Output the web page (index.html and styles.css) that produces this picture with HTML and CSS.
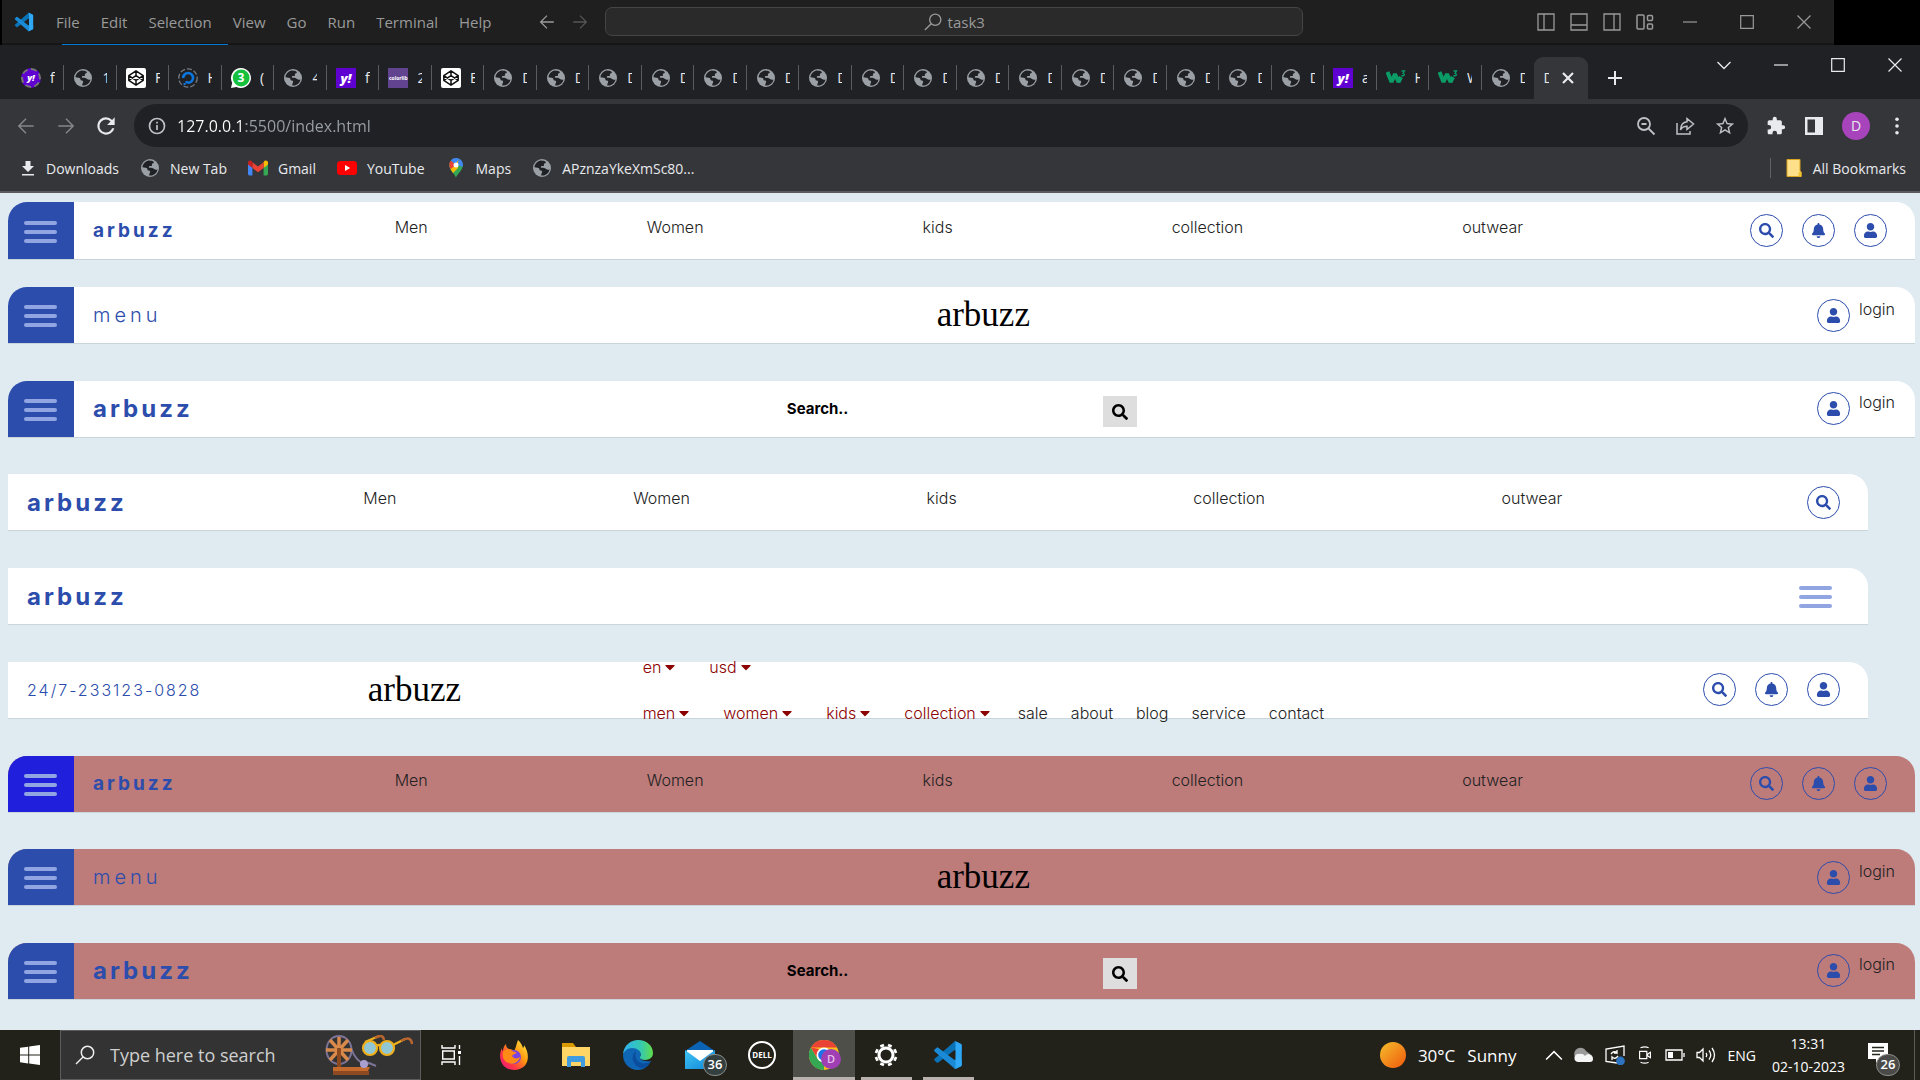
FILE: index.html
```html
<!DOCTYPE html>
<html lang="en">
<head>
<meta charset="utf-8">
<title>Document</title>
<link rel="stylesheet" href="styles.css">
</head>
<body>
<svg class="defs" aria-hidden="true">
  <defs>
    <linearGradient id="g-sun" x1="0" y1="0" x2="1" y2="1"><stop offset="0" stop-color="#f4be2c"/><stop offset="1" stop-color="#f0580c"/></linearGradient>
    <linearGradient id="g-fox" x1="1" y1="0" x2="0" y2="1"><stop offset="0" stop-color="#fff44f"/><stop offset=".4" stop-color="#ff980e"/><stop offset=".7" stop-color="#ff3647"/><stop offset="1" stop-color="#e31587"/></linearGradient>
    <linearGradient id="g-edge" x1="0" y1="0" x2="1" y2="0"><stop offset="0" stop-color="#2fb1f0"/><stop offset=".6" stop-color="#35c9b0"/><stop offset="1" stop-color="#62dc4a"/></linearGradient>
    <linearGradient id="g-mail" x1="0" y1="0" x2="1" y2="1"><stop offset="0" stop-color="#40c4f4"/><stop offset="1" stop-color="#0f86d8"/></linearGradient>
  </defs>
  <symbol id="i-vscode" viewBox="0 0 24 24"><path fill="#0a73b8" d="M17.5 1 23 3.5v5L17 8.200 4.200 17.900a1 1 0 0 1-1.300 0L1.300 16.400a1 1 0 0 1 0-1.500z"/><path fill="#1a8ad6" d="M17.500 23 23 20.500v-5L17 15.800 4.200 6.100a1 1 0 0 0-1.300 0L1.300 7.600a1 1 0 0 0 0 1.500z"/><path fill="#2fa8f6" d="M17 .9a1.500 1.500 0 0 1 1 0l4.200 2a1.500 1.500 0 0 1 .8 1.300v15.600a1.500 1.500 0 0 1-.8 1.300l-4.200 2a1.500 1.500 0 0 1-1.600-.3c.6.500 1.600.1 1.600-.8V2c0-.9-1-1.300-1.600-.8z"/></symbol>
  <symbol id="i-back" viewBox="0 0 20 20"><path fill="none" stroke="currentColor" stroke-width="1.600" d="M18.500 10H2M10 2l-8 8 8 8"/></symbol>
  <symbol id="i-forward" viewBox="0 0 20 20"><path fill="none" stroke="currentColor" stroke-width="1.600" d="M1.500 10H18M10 2l8 8-8 8"/></symbol>
  <symbol id="i-lens" viewBox="0 0 20 20"><g fill="none" stroke="currentColor" stroke-width="1.500"><circle cx="12.500" cy="7.500" r="6.200"/><path d="M8 12 1 19"/></g></symbol>
  <symbol id="i-panel-left" viewBox="0 0 18 18"><path fill="none" stroke="currentColor" stroke-width="1.300" d="M1 1h16v16H1zM7 1v16"/></symbol>
  <symbol id="i-panel-bottom" viewBox="0 0 18 18"><path fill="none" stroke="currentColor" stroke-width="1.300" d="M1 1h16v16H1zM1 12h16"/></symbol>
  <symbol id="i-panel-right" viewBox="0 0 18 18"><path fill="none" stroke="currentColor" stroke-width="1.300" d="M1 1h16v16H1zM11 1v16"/></symbol>
  <symbol id="i-layout" viewBox="0 0 18 18"><g fill="none" stroke="currentColor" stroke-width="1.500"><rect x="1" y="2" width="7" height="14" rx="1"/><rect x="11.500" y="2.500" width="5" height="5" rx="1"/><rect x="11.500" y="11" width="5" height="5" rx="1"/></g></symbol>
  <symbol id="i-min" viewBox="0 0 14 14"><path stroke="currentColor" stroke-width="1.200" d="M0 7h14"/></symbol>
  <symbol id="i-max" viewBox="0 0 14 14"><path fill="none" stroke="currentColor" stroke-width="1.200" d="M.7.7h12.600v12.600H.7z"/></symbol>
  <symbol id="i-close" viewBox="0 0 14 14"><path stroke="currentColor" stroke-width="1.200" d="m.5.5 13 13m0-13-13 13"/></symbol>
  <symbol id="i-close-bold" viewBox="0 0 14 14"><path stroke="currentColor" stroke-width="2.200" d="m2 2 10 10m0-10L2 12"/></symbol>
  <symbol id="i-chevron" viewBox="0 0 14 14"><path fill="none" stroke="currentColor" stroke-width="1.300" d="m.5 4 6.500 6.500L13.500 4"/></symbol>
  <symbol id="i-plus" viewBox="0 0 14 14"><path stroke="currentColor" stroke-width="2" d="M7 0v14M0 7h14"/></symbol>
  <symbol id="i-globe" viewBox="0 0 20 20"><circle cx="10" cy="10" r="9" fill="#9aa0a6"/><path fill="#202124" d="M8.800 2.600c-3.300.5-6 3.200-6.300 6.600l1.500.3c2.500.3 3.400.7 3.400 1.800 0 .8.6 1.200 1.500 1.300 1 .1 1.500.8 1.100 1.900-.3 1-.8 1.600-.8 3 4 .5 7.600-2 8.300-6-1.400.4-2.300.4-3.400-.4-1-.8-2.300-1.300-4-1.300-1.200 0-1.500-.6-1.100-1.300.4-.6 1-.6 2-.5 1.200 0 1-.7.9-1.500-.1-1 .9-1.100 1.600-1.500.5-.3.500-1.100-.2-1.600C11.500 2.400 9.400 2.900 8.800 2.600z"/></symbol>
  <symbol id="i-codepen" viewBox="0 0 20 20"><rect width="20" height="20" rx="2" fill="#fff"/><path fill="none" stroke="#111" stroke-width="1.500" stroke-linejoin="round" d="m10 2.800 7.200 4.800v4.800L10 17.200l-7.200-4.800V7.600zM2.800 7.600 10 12.400l7.200-4.800M2.800 12.400 10 7.600l7.200 4.800M10 2.800v4.800m0 4.800v4.800"/></symbol>
  <symbol id="i-ocean" viewBox="0 0 20 20"><circle cx="10" cy="10" r="9.200" fill="none" stroke="#777c82" stroke-width="1.300" stroke-dasharray="5 2"/><path fill="none" stroke="#0b76e0" stroke-width="2.600" d="M10 14.800A4.900 4.900 0 1 0 5.200 10"/><path fill="#0b76e0" d="M7.500 13H10v2.500H7.500zM5.500 15h2v2h-2z"/></symbol>
  <symbol id="i-bubble" viewBox="0 0 20 20"><path fill="#fff" d="M10 0a10 10 0 1 1-4.600 18.900L0 20l1.200-5.200A10 10 0 0 1 10 0z"/><circle cx="10.200" cy="10" r="8.400" fill="#16c13f"/></symbol>
  <symbol id="i-w3" viewBox="0 0 20 20"><path fill="none" stroke="#0a9b66" stroke-width="4" stroke-linejoin="bevel" d="m1.500 4 4 10L9 6l3.500 8L15 9"/><path fill="none" stroke="#0a9b66" stroke-width="1.300" d="M15.500 3h3l-1.500 2.400c2.200.2 1.800 3-1.700 2.200"/></symbol>
  <symbol id="i-reload" viewBox="0 0 24 24"><path fill="currentColor" d="M17.650 6.350A7.960 7.960 0 0 0 12 4a8 8 0 1 0 7.730 10h-2.080A6 6 0 1 1 12 6c1.660 0 3.140.69 4.220 1.780L13 11h7V4z"/></symbol>
  <symbol id="i-info" viewBox="0 0 18 18"><g fill="none" stroke="currentColor" stroke-width="1.700"><circle cx="9" cy="9" r="7.500"/><path d="M9 8v5M9 4.800v1.800"/></g></symbol>
  <symbol id="i-zoom-out" viewBox="0 0 20 20"><g fill="none" stroke="currentColor" stroke-width="1.800"><circle cx="8" cy="8" r="6"/><path d="m12.500 12.500 6 6M5.500 8h5"/></g></symbol>
  <symbol id="i-share" viewBox="0 0 20 20"><g fill="none" stroke="currentColor" stroke-width="1.500"><path d="M2 7v11h13v-3M12 2.500l6.500 5.500-6.500 5.500v-3.200c-3 0-5 1-6.500 3.700.3-5 2.500-8 6.500-8.300z"/></g></symbol>
  <symbol id="i-star" viewBox="0 0 24 24"><path fill="currentColor" d="m22 9.240-7.190-.62L12 2 9.190 8.630 2 9.240l5.460 4.730L5.820 21 12 17.270 18.180 21l-1.630-7.030zM12 15.400l-3.760 2.270 1-4.280-3.320-2.880 4.380-.38L12 6.100l1.710 4.040 4.380.38-3.320 2.880 1 4.280z"/></symbol>
  <symbol id="i-puzzle" viewBox="0 0 24 24"><path fill="currentColor" d="M20.500 11H19V7c0-1.100-.9-2-2-2h-4V3.500a2.500 2.500 0 0 0-5 0V5H4c-1.100 0-1.990.9-1.990 2v3.800H3.500a2.700 2.700 0 0 1 0 5.400H2V20c0 1.100.9 2 2 2h3.800v-1.500a2.700 2.700 0 0 1 5.400 0V22H17c1.100 0 2-.9 2-2v-4h1.500a2.500 2.500 0 0 0 0-5z"/></symbol>
  <symbol id="i-side" viewBox="0 0 20 20"><path fill="currentColor" fill-rule="evenodd" d="M1 1h18v18H1zm2.500 2.500v13H11v-13z"/></symbol>
  <symbol id="i-dots" viewBox="0 0 20 20"><g fill="currentColor"><circle cx="10" cy="2.500" r="2"/><circle cx="10" cy="10" r="2"/><circle cx="10" cy="17.500" r="2"/></g></symbol>
  <symbol id="i-download" viewBox="0 0 16 16"><path fill="currentColor" d="M5.500 1h5v5H14l-6 6-6-6h3.500zM2 14h12v1.600H2z"/></symbol>
  <symbol id="i-gmail" viewBox="0 0 20 16"><path fill="#4285f4" d="M0 2.500V14a1.400 1.400 0 0 0 1.400 1.400h3V6z"/><path fill="#34a853" d="M20 2.500V14a1.400 1.400 0 0 1-1.400 1.400h-3V6z"/><path fill="#fbbc04" d="M15.600 2.200V8L20 4.500V2.800c0-2.200-2.300-3-3.600-1.900z"/><path fill="#ea4335" d="M4.400 8V2.200L10 6.400l5.600-4.200V8L10 12.200z"/><path fill="#c5221f" d="M0 2.800v1.700L4.400 8V2.200L3.600.9C2.300-.2 0 .6 0 2.800z"/></symbol>
  <symbol id="i-youtube" viewBox="0 0 20 16"><rect y="1" width="20" height="14" rx="3.500" fill="#f00"/><path fill="#fff" d="m8 5 5.200 3L8 11z"/></symbol>
  <symbol id="i-maps" viewBox="0 0 14 20"><path fill="#34a853" d="M7 20C6.500 16 .2 13 .2 7A6.800 6.800 0 0 1 13.800 7C13.800 13 7.500 16 7 20z"/><path fill="#fbbc04" d="m1.500 11 8-9.500L9 10l-5 5z"/><path fill="#ea4335" d="M1.900 2.500 7 7l-5.500 4C-.3 8-.2 5 1.900 2.500z"/><path fill="#4285f4" d="M1.900 2.500C4 0 7-.5 9.500.5L7 7zM9.500.5c4 1.500 5 5 4 8.500L9 7z"/><circle cx="7" cy="7" r="2.500" fill="#fff"/></symbol>
  <symbol id="i-folder" viewBox="0 0 16 18"><path fill="#ffe08a" stroke="#d9a520" d="M1 .5h13V12l1.300 1v4.500H1z"/><path fill="#f1c232" d="M12.500 13H15v4.500h-2.500z"/></symbol>
  <symbol id="i-search" viewBox="0 0 512 512"><path fill="currentColor" d="M505 442.700L405.300 343c-4.500-4.500-10.600-7-17-7H372c27.600-35.300 44-79.700 44-128C416 93.100 322.900 0 208 0S0 93.100 0 208s93.100 208 208 208c48.300 0 92.700-16.400 128-44v16.300c0 6.400 2.500 12.500 7 17l99.700 99.700c9.400 9.400 24.600 9.400 33.900 0l28.300-28.300c9.400-9.400 9.400-24.600.1-34zM208 336c-70.700 0-128-57.200-128-128 0-70.700 57.200-128 128-128 70.700 0 128 57.200 128 128 0 70.700-57.200 128-128 128z"/></symbol>
  <symbol id="i-bell" viewBox="0 0 448 512"><path fill="currentColor" d="M224 512c35.320 0 63.970-28.650 63.970-64H160.030c0 35.350 28.650 64 63.970 64zm215.390-149.710c-19.320-20.760-55.470-51.990-55.470-154.290 0-77.700-54.480-139.900-127.940-155.160V32c0-17.670-14.320-32-31.980-32s-31.980 14.330-31.980 32v20.840C118.560 68.100 64.080 130.300 64.080 208c0 102.300-36.150 133.530-55.470 154.290-6 6.450-8.660 14.160-8.610 21.710.11 16.400 12.980 32 32.100 32h383.800c19.120 0 32-15.600 32.100-32 .05-7.550-2.610-15.270-8.610-21.710z"/></symbol>
  <symbol id="i-user" viewBox="0 0 448 512"><path fill="currentColor" d="M224 256c70.700 0 128-57.300 128-128S294.700 0 224 0 96 57.300 96 128s57.300 128 128 128zm89.600 32h-16.700c-22.200 10.200-46.900 16-72.900 16s-50.600-5.800-72.900-16h-16.700C60.200 288 0 348.200 0 422.400V464c0 26.500 21.500 48 48 48h352c26.500 0 48-21.500 48-48v-41.600c0-74.200-60.200-134.400-134.400-134.400z"/></symbol>
  <symbol id="i-caret" viewBox="0 0 320 512"><path fill="currentColor" d="M31.300 192h257.300c17.800 0 26.700 21.500 14.100 34.100L174.100 354.800c-7.800 7.800-20.500 7.800-28.300 0L17.200 226.100C4.600 213.500 13.500 192 31.300 192z"/></symbol>
  <symbol id="i-windows" viewBox="0 0 20 20"><path fill="#fff" d="M0 2.800 8.200 1.700v7.900H0zM9.200 1.500 20 0v9.600H9.200zM0 10.500h8.200v7.900L0 17.200zM9.200 10.500H20V20L9.200 18.500z"/></symbol>
  <symbol id="i-wheel" viewBox="0 0 88 40"><g fill="none" stroke="#7d7397" stroke-width="2"><ellipse cx="14" cy="15" rx="12.500" ry="14"/><path d="M26 13q5 14 14 16M36 33l8-5 7 3"/></g><g stroke="#d98a4b" stroke-width="3.500"><path d="M14 2v26M1 15h26M5 5l18 20M23 5 5 25"/></g><path fill="#8d4a20" d="M12 13h4v20h-4z"/><path fill="#c46a2c" d="M8 32h37l-2 4v4H8z"/><path fill="#8d4a20" d="M8 36h36v4H8z"/><circle cx="39" cy="29" r="4" fill="#aaa0d0"/><g stroke="#efb01c" stroke-width="2.200"><circle cx="45" cy="13" r="7" fill="#91c7d4"/><circle cx="62" cy="13" r="7" fill="#91c7d4"/><path fill="none" d="M52 11q2-2 4 0M40 7 54 1M68 10 80 4"/></g><path fill="none" stroke="#b96530" stroke-width="2.500" d="M50 3q8-5 9 2M76 6q10-6 11 3"/></symbol>
  <symbol id="i-taskview" viewBox="0 0 22 22"><path fill="none" stroke="#fff" stroke-width="1.400" d="M1 1v3h13V1M1 21v-3h13v3M1.700 7h11.600v8H1.700zM18.500 1v4M18.500 12v9"/><path fill="#fff" d="M17 7h3v3h-3z"/></symbol>
  <symbol id="i-firefox" viewBox="0 0 30 30"><path fill="url(#g-fox)" d="M19 0c3 3 4 5 5 8 1-1 1-2 1-3 7 10 5 25-10 25C3 30-2 18 3 8c0 2 0 2 1 3 0-3 1-5 3-7 0 3 1 4 3 5 3 0 4 1 5 2 2-3 2-6 4-11z"/><circle cx="15" cy="17" r="7" fill="#7a42e0"/><path fill="#ff8a16" d="M4 12c3-4 7-3 9-1 2 1 4 1 5 2-2 1-4 1-5 3 2 3 5 3 8 1-1 5-6 8-11 6-5-1-7-6-6-11z"/></symbol>
  <symbol id="i-explorer" viewBox="0 0 30 26"><path fill="#d99a00" d="M1 1h11l3 4v6H1z"/><path fill="#ffd566" d="M1 5h28v19H1z"/><path fill="#3f9ce0" d="M6 25V16q0-2 2-2h14q2 0 2 2v9h-4v-5h-10v5z"/></symbol>
  <symbol id="i-edge" viewBox="0 0 30 30"><path fill="#0f66b5" d="M0 15C2 7 8 6 12 8c6 2 7 6 5 9-1 2 3 5 11 4-3 6-8 9-13 9C6 30 0 23 0 15z"/><path fill="url(#g-edge)" d="M0 14C1 5 8 0 15 0c9 0 15 6 15 13 0 7-8 8-12 6-2-1-1-2 0-4 0-4-4-7-9-7-4 0-7 2-9 6z"/><path fill="#0b4e9d" d="M13 11c-5 3-5 13 4 17 5 1 9-3 10-6-8 4-17-1-14-11z"/></symbol>
  <symbol id="i-mail" viewBox="0 0 30 28"><path fill="#0b63b6" d="m0 10 15-10 15 10z"/><path fill="#fff" d="M2 9h26v8L15 24 2 17z"/><path fill="url(#g-mail)" d="M0 9l15 11L30 9v19H0z"/></symbol>
  <symbol id="i-chrome" viewBox="0 0 30 30"><circle cx="15" cy="15" r="15" fill="#fbc116"/><path fill="#ea4335" d="M2 7.500A15 15 0 0 1 28 7.500H15z"/><path fill="#34a853" d="M2 7.500 8.500 18.800 15 22v8A15 15 0 0 1 2 7.500z"/><path fill="#ea4335" d="M2 7.500 8.500 18.500 10 9z"/><circle cx="15" cy="15" r="7.500" fill="#fff"/><circle cx="15" cy="15" r="5.800" fill="#1a73e8"/></symbol>
  <symbol id="i-gear" viewBox="0 0 24 24"><g fill="none" stroke="#fff"><circle cx="12" cy="12" r="7" stroke-width="3"/><path stroke-width="4" d="M15.300 4 16.400 1.500M20 8.700l2.500-1.100M20 15.300l2.500 1.100M15.300 20l1.100 2.500M8.700 20l-1.100 2.500M4 15.300l-2.500 1.100M4 8.700 1.500 7.600M8.700 4 7.600 1.500"/></g></symbol>
  <symbol id="i-up" viewBox="0 0 16 16"><path fill="none" stroke="#fff" stroke-width="1.400" d="m1 12 7-7 7 7"/></symbol>
  <symbol id="i-cloud" viewBox="0 0 20 16"><path fill="#9b9b99" d="M1 10A6 6 0 0 1 12 4l4 3-8 5z"/><path fill="#f5f5f5" d="M4 15a4 4 0 0 1 1-8q4-1 6 2 1-2 4-2 4 1 4 5 0 3-3 3z"/></symbol>
  <symbol id="i-sync" viewBox="0 0 20 20"><path fill="none" stroke="#fff" stroke-width="1.300" d="M12 18 1 16.500V4L19 1v10M6 9q3-4 6-1V5m0 3H9M13 11q-3 4-6 1v3"/><circle cx="15.500" cy="16" r="4.400" fill="#2d73bf"/></symbol>
  <symbol id="i-meet" viewBox="0 0 16 20"><path fill="none" stroke="#fff" stroke-width="1.300" d="M3 2q5-2 9 0M3 18q5 2 9 0M2 6h8v8H2zM11 9l3-2v6l-3-2z"/></symbol>
  <symbol id="i-battery" viewBox="0 0 20 12"><path fill="none" stroke="#fff" stroke-width="1.300" d="M1 1h16v10H1zM19 4v4"/><path fill="#fff" d="M3 3h5v6H3z"/></symbol>
  <symbol id="i-volume" viewBox="0 0 20 16"><path fill="none" stroke="#fff" stroke-width="1.300" d="M1 5.500h2.500L7 2v12l-3.500-3.500H1zM10 6q1.500 2 0 4M13 3.500q3.500 4.500 0 9M16 1q5 7 0 14"/></symbol>
  <symbol id="i-notes" viewBox="0 0 20 20"><path fill="#fff" d="M0 0h20v16h-8l-4 4v-4H0z"/><path stroke="#24251d" stroke-width="1.500" d="M4 4.500h12M4 8h12M4 11.500h8"/></symbol>
</svg>

<header class="editor">
  <div class="editor-bar">
    <svg class="ic20"><use href="#i-vscode"/></svg>
    <nav class="menus">
      <button>File</button><button>Edit</button><button>Selection</button><button>View</button><button>Go</button><button>Run</button><button>Terminal</button><button>Help</button>
    </nav>
    <div class="history">
      <button aria-label="Back"><svg class="ic16"><use href="#i-back"/></svg></button>
      <button class="dim" aria-label="Forward"><svg class="ic16"><use href="#i-forward"/></svg></button>
    </div>
    <button class="command"><svg class="ic18"><use href="#i-lens"/></svg>task3</button>
    <div class="layouts">
      <button aria-label="Primary side bar"><svg class="ic18"><use href="#i-panel-left"/></svg></button>
      <button aria-label="Panel"><svg class="ic18"><use href="#i-panel-bottom"/></svg></button>
      <button aria-label="Secondary side bar"><svg class="ic18"><use href="#i-panel-right"/></svg></button>
      <button aria-label="Customize layout"><svg class="ic18"><use href="#i-layout"/></svg></button>
    </div>
    <div class="winctl">
      <button aria-label="Minimize"><svg class="ic14"><use href="#i-min"/></svg></button>
      <button aria-label="Maximize"><svg class="ic14"><use href="#i-max"/></svg></button>
      <button aria-label="Close"><svg class="ic14"><use href="#i-close"/></svg></button>
    </div>
  </div>
</header>

<section class="browser">
  <div class="tabstrip">
    <div class="tabs">
      <button class="tab"><span class="fav yahoo ring">y!</span><span class="tt">f</span></button>
      <button class="tab"><svg class="fav"><use href="#i-globe"/></svg><span class="tt">1</span></button>
      <button class="tab"><svg class="fav"><use href="#i-codepen"/></svg><span class="tt">F</span></button>
      <button class="tab"><svg class="fav"><use href="#i-ocean"/></svg><span class="tt">H</span></button>
      <button class="tab"><span class="fav chat"><svg><use href="#i-bubble"/></svg><b>3</b></span><span class="tt">(</span></button>
      <button class="tab"><svg class="fav"><use href="#i-globe"/></svg><span class="tt">4</span></button>
      <button class="tab"><span class="fav yahoo">y!</span><span class="tt">f</span></button>
      <button class="tab"><span class="fav colorlib">colorlib</span><span class="tt">2</span></button>
      <button class="tab"><svg class="fav"><use href="#i-codepen"/></svg><span class="tt">E</span></button>
      <button class="tab"><svg class="fav"><use href="#i-globe"/></svg><span class="tt">D</span></button>
      <button class="tab"><svg class="fav"><use href="#i-globe"/></svg><span class="tt">D</span></button>
      <button class="tab"><svg class="fav"><use href="#i-globe"/></svg><span class="tt">D</span></button>
      <button class="tab"><svg class="fav"><use href="#i-globe"/></svg><span class="tt">D</span></button>
      <button class="tab"><svg class="fav"><use href="#i-globe"/></svg><span class="tt">D</span></button>
      <button class="tab"><svg class="fav"><use href="#i-globe"/></svg><span class="tt">D</span></button>
      <button class="tab"><svg class="fav"><use href="#i-globe"/></svg><span class="tt">D</span></button>
      <button class="tab"><svg class="fav"><use href="#i-globe"/></svg><span class="tt">D</span></button>
      <button class="tab"><svg class="fav"><use href="#i-globe"/></svg><span class="tt">D</span></button>
      <button class="tab"><svg class="fav"><use href="#i-globe"/></svg><span class="tt">D</span></button>
      <button class="tab"><svg class="fav"><use href="#i-globe"/></svg><span class="tt">D</span></button>
      <button class="tab"><svg class="fav"><use href="#i-globe"/></svg><span class="tt">D</span></button>
      <button class="tab"><svg class="fav"><use href="#i-globe"/></svg><span class="tt">D</span></button>
      <button class="tab"><svg class="fav"><use href="#i-globe"/></svg><span class="tt">D</span></button>
      <button class="tab"><svg class="fav"><use href="#i-globe"/></svg><span class="tt">D</span></button>
      <button class="tab"><svg class="fav"><use href="#i-globe"/></svg><span class="tt">D</span></button>
      <button class="tab"><span class="fav yahoo">y!</span><span class="tt">a</span></button>
      <button class="tab"><svg class="fav"><use href="#i-w3"/></svg><span class="tt">H</span></button>
      <button class="tab"><svg class="fav"><use href="#i-w3"/></svg><span class="tt">W</span></button>
      <button class="tab"><svg class="fav"><use href="#i-globe"/></svg><span class="tt">D</span></button>
    </div>
    <button class="tab-active"><span class="tt">D</span><svg class="ic14"><use href="#i-close-bold"/></svg></button>
    <button class="newtab" aria-label="New tab"><svg class="ic14"><use href="#i-plus"/></svg></button>
    <div class="winctl winctl-browser">
      <button aria-label="Search tabs"><svg class="ic14"><use href="#i-chevron"/></svg></button>
      <button aria-label="Minimize window"><svg class="ic14"><use href="#i-min"/></svg></button>
      <button aria-label="Maximize window"><svg class="ic14"><use href="#i-max"/></svg></button>
      <button aria-label="Close window"><svg class="ic14"><use href="#i-close"/></svg></button>
    </div>
  </div>
  <div class="toolbar">
    <button class="muted" aria-label="Go back"><svg class="ic18"><use href="#i-back"/></svg></button>
    <button class="muted" aria-label="Go forward"><svg class="ic18"><use href="#i-forward"/></svg></button>
    <button aria-label="Reload"><svg class="ic26"><use href="#i-reload"/></svg></button>
    <div class="omnibox">
      <svg class="ic18"><use href="#i-info"/></svg>
      <input type="text" class="url" aria-label="Address" value="127.0.0.1:5500/index.html">
      <button aria-label="Zoom"><svg class="ic20"><use href="#i-zoom-out"/></svg></button>
      <button aria-label="Share"><svg class="ic20"><use href="#i-share"/></svg></button>
      <button aria-label="Bookmark"><svg class="ic22"><use href="#i-star"/></svg></button>
    </div>
    <div class="extras">
      <button aria-label="Extensions"><svg class="ic20"><use href="#i-puzzle"/></svg></button>
      <button aria-label="Side panel"><svg class="ic20"><use href="#i-side"/></svg></button>
      <button class="avatar">D</button>
      <button aria-label="Menu"><svg class="ic18"><use href="#i-dots"/></svg></button>
    </div>
  </div>
  <nav class="bookmarks">
    <a href="#"><svg class="ic16"><use href="#i-download"/></svg>Downloads</a>
    <a href="#"><svg class="ic20"><use href="#i-globe"/></svg>New Tab</a>
    <a href="#"><svg class="ic20"><use href="#i-gmail"/></svg>Gmail</a>
    <a href="#"><svg class="ic20"><use href="#i-youtube"/></svg>YouTube</a>
    <a href="#"><svg class="ic20"><use href="#i-maps"/></svg>Maps</a>
    <a href="#"><svg class="ic20"><use href="#i-globe"/></svg>APznzaYkeXmSc80...</a>
    <a href="#" class="all"><svg class="ic18"><use href="#i-folder"/></svg>All Bookmarks</a>
  </nav>
</section>

<main class="page">
  <header class="bar first">
    <button class="burger" aria-label="Menu"><i></i><i></i><i></i></button>
    <a href="#" class="brand small">arbuzz</a>
    <nav class="links"><a href="#">Men</a><a href="#">Women</a><a href="#">kids</a><a href="#">collection</a><a href="#">outwear</a></nav>
    <div class="icons">
      <button aria-label="Search"><svg><use href="#i-search"/></svg></button>
      <button aria-label="Notifications"><svg><use href="#i-bell"/></svg></button>
      <button aria-label="Account"><svg><use href="#i-user"/></svg></button>
    </div>
  </header>
  <div class="stack">
    <header class="bar spread">
      <button class="burger" aria-label="Menu"><i></i><i></i><i></i></button>
      <a href="#" class="brand word">menu</a>
      <span class="serif">arbuzz</span>
      <div class="account"><button aria-label="Account"><svg><use href="#i-user"/></svg></button><a href="#">login</a></div>
    </header>
    <header class="bar spread">
      <button class="burger" aria-label="Menu"><i></i><i></i><i></i></button>
      <a href="#" class="brand">arbuzz</a>
      <form class="search"><input type="text" aria-label="Search" placeholder="Search.."><button type="button" aria-label="Submit search"><svg><use href="#i-search"/></svg></button></form>
      <div class="account"><button aria-label="Account"><svg><use href="#i-user"/></svg></button><a href="#">login</a></div>
    </header>
    <header class="bar short">
      <a href="#" class="brand">arbuzz</a>
      <nav class="links"><a href="#">Men</a><a href="#">Women</a><a href="#">kids</a><a href="#">collection</a><a href="#">outwear</a></nav>
      <div class="icons"><button aria-label="Search"><svg><use href="#i-search"/></svg></button></div>
    </header>
    <header class="bar short spread">
      <a href="#" class="brand">arbuzz</a>
      <button class="burger plain" aria-label="Menu"><i></i><i></i><i></i></button>
    </header>
    <header class="bar short shop">
      <a href="#" class="phone">24/7-233123-0828</a>
      <span class="serif">arbuzz</span>
      <nav class="lists">
        <div class="row"><button>en<svg><use href="#i-caret"/></svg></button><button>usd<svg><use href="#i-caret"/></svg></button></div>
        <div class="row"><button>men<svg><use href="#i-caret"/></svg></button><button>women<svg><use href="#i-caret"/></svg></button><button>kids<svg><use href="#i-caret"/></svg></button><button>collection<svg><use href="#i-caret"/></svg></button><a href="#">sale</a><a href="#">about</a><a href="#">blog</a><a href="#">service</a><a href="#">contact</a></div>
      </nav>
      <div class="icons">
        <button aria-label="Search"><svg><use href="#i-search"/></svg></button>
        <button aria-label="Notifications"><svg><use href="#i-bell"/></svg></button>
        <button aria-label="Account"><svg><use href="#i-user"/></svg></button>
      </div>
    </header>
    <header class="bar rose">
      <button class="burger bright" aria-label="Menu"><i></i><i></i><i></i></button>
      <a href="#" class="brand small">arbuzz</a>
      <nav class="links"><a href="#">Men</a><a href="#">Women</a><a href="#">kids</a><a href="#">collection</a><a href="#">outwear</a></nav>
      <div class="icons">
        <button aria-label="Search"><svg><use href="#i-search"/></svg></button>
        <button aria-label="Notifications"><svg><use href="#i-bell"/></svg></button>
        <button aria-label="Account"><svg><use href="#i-user"/></svg></button>
      </div>
    </header>
    <header class="bar rose spread">
      <button class="burger" aria-label="Menu"><i></i><i></i><i></i></button>
      <a href="#" class="brand word">menu</a>
      <span class="serif">arbuzz</span>
      <div class="account"><button aria-label="Account"><svg><use href="#i-user"/></svg></button><a href="#">login</a></div>
    </header>
    <header class="bar rose spread">
      <button class="burger" aria-label="Menu"><i></i><i></i><i></i></button>
      <a href="#" class="brand">arbuzz</a>
      <form class="search"><input type="text" aria-label="Search" placeholder="Search.."><button type="button" aria-label="Submit search"><svg><use href="#i-search"/></svg></button></form>
      <div class="account"><button aria-label="Account"><svg><use href="#i-user"/></svg></button><a href="#">login</a></div>
    </header>
  </div>
</main>

<footer class="taskbar">
  <button class="start" aria-label="Start"><svg class="ic20"><use href="#i-windows"/></svg></button>
  <label class="finder"><svg class="ic20"><use href="#i-lens"/></svg><input type="text" aria-label="Search Windows" placeholder="Type here to search"><svg class="wheel"><use href="#i-wheel"/></svg></label>
  <div class="apps">
    <button aria-label="Task view"><svg class="ic22"><use href="#i-taskview"/></svg></button>
    <button aria-label="Firefox"><svg class="ic30"><use href="#i-firefox"/></svg></button>
    <button aria-label="File Explorer"><svg class="ic30"><use href="#i-explorer"/></svg></button>
    <button aria-label="Edge"><svg class="ic30"><use href="#i-edge"/></svg></button>
    <button aria-label="Mail"><svg class="ic30"><use href="#i-mail"/></svg><span class="badge">36</span></button>
    <button><span class="dell">DELL</span></button>
    <button class="current" aria-label="Chrome"><svg class="ic30"><use href="#i-chrome"/></svg><span class="badge profile">D</span></button>
    <button class="open" aria-label="Settings"><svg class="ic24"><use href="#i-gear"/></svg></button>
    <button class="open" aria-label="Visual Studio Code"><svg class="ic30"><use href="#i-vscode"/></svg></button>
  </div>
  <div class="tray">
    <button class="weather"><svg class="ic26"><circle cx="13" cy="13" r="13" fill="url(#g-sun)"/></svg><span>30°C</span><span>Sunny</span></button>
    <div class="status">
      <svg class="ic18"><use href="#i-up"/></svg><svg class="ic20"><use href="#i-cloud"/></svg><svg class="ic20"><use href="#i-sync"/></svg><svg class="ic18"><use href="#i-meet"/></svg><svg class="ic20"><use href="#i-battery"/></svg><svg class="ic20"><use href="#i-volume"/></svg>
    </div>
    <span class="lang">ENG</span>
    <time class="clock"><span>13:31</span><span>02-10-2023</span></time>
    <button class="notes" aria-label="Notifications"><svg class="ic20"><use href="#i-notes"/></svg><span class="badge">26</span></button>
  </div>
</footer>
</body>
</html>
```
FILE: styles.css
```css
* { box-sizing: border-box; }
html, body { height: 100%; }
body {
  margin: 0;
  display: flex;
  flex-direction: column;
  overflow: hidden;
  font-family: "Open Sans", "Noto Sans", sans-serif;
  background: #000;
}
button, input { font: inherit; color: inherit; background: none; border: 0; padding: 0; margin: 0; }
input { outline: 0; min-width: 0; }
a { color: inherit; text-decoration: none; }
button { display: flex; align-items: center; justify-content: center; flex: none; white-space: nowrap; }
svg { flex: none; display: block; }
.defs { position: absolute; width: 0; height: 0; }
.ic14 { width: 14px; height: 14px; }
.ic16 { width: 16px; height: 16px; }
.ic18 { width: 18px; height: 18px; }
.ic20 { width: 20px; height: 20px; }
.ic22 { width: 22px; height: 22px; }
.ic24 { width: 24px; height: 24px; }
.ic26 { width: 26px; height: 26px; }
.ic30 { width: 30px; height: 30px; }

/* editor title bar */
.editor { flex: none; padding: 0 86px 0 2px; }
.editor-bar {
  height: 45px;
  display: flex;
  align-items: center;
  padding: 0 23px 0 12px;
  background: #1f1f1f;
  border-bottom: 2px solid #161617;
  color: #9a9a9a;
  font-size: 15px;
  position: relative;
}
.editor-bar::after { content: ""; position: absolute; left: 60px; bottom: -2px; width: 166px; height: 1px; background: #0078d4; }
.menus { display: flex; gap: 21px; margin-left: 22px; }
.history { display: flex; gap: 17px; margin: 0 17px 0 48px; }
.history .dim { color: #555; }
.command {
  flex: 1;
  height: 29px;
  gap: 6px;
  background: #2a2a2a;
  border: 1px solid #454545;
  border-radius: 7px;
}
.layouts { display: flex; gap: 15px; margin: 0 29px 0 234px; }
.winctl { display: flex; gap: 43px; }

/* browser chrome */
.browser { flex: none; background: #35363a; color: #e8eaed; border-bottom: 2px solid #5c5c60; }
.tabstrip { display: flex; align-items: flex-end; height: 54px; padding-left: 12px; background: #202124; }
.tabs { display: flex; flex: 1; min-width: 0; height: 43px; align-items: center; }
.tab {
  flex: 1 1 0;
  min-width: 0;
  height: 25px;
  justify-content: flex-start;
  gap: 9px;
  padding-left: 9px;
  border-right: 1px solid #5a5c60;
}
.tab:last-child { border-color: transparent; }
.fav { width: 20px; height: 20px; flex: none; line-height: 20px; text-align: center; }
.tt { width: 5px; overflow: hidden; font-size: 14px; line-height: 20px; text-align: left; }
.yahoo { background: #5f01d1; color: #fff; font-size: 13px; font-weight: 800; font-style: italic; }
.yahoo.ring { border: 2px dashed #777; border-radius: 50%; font-size: 9px; line-height: 15px; }
.colorlib { background: #62438f; color: #fff; font-size: 5px; font-weight: 700; }
.chat { display: grid; place-items: center; }
.chat > * { grid-area: 1 / 1; }
.chat svg { width: 20px; height: 20px; }
.chat b { font-size: 12px; color: #fff; z-index: 1; }
.tab-active { width: 54px; height: 42px; gap: 12px; padding-right: 4px; background: #35363a; border-radius: 9px 9px 0 0; }
.newtab { width: 54px; height: 42px; }
.winctl-browser { width: 278px; height: 68px; align-items: center; justify-content: flex-end; padding-right: 18px; }
.toolbar { display: flex; align-items: center; height: 48px; padding: 5px 14px 0 17px; }
.toolbar > button { margin-right: 22px; }
.toolbar > button:nth-child(3) { margin: 0 15px 0 -4px; }
.muted { color: #85878b; }
.omnibox { flex: 1; display: flex; align-items: center; gap: 19px; height: 43px; padding: 0 12px 0 14px; border-radius: 22px; background: #202124; color: #bdc1c6; }
.url {
  flex: 1;
  margin-left: -8px;
  font-size: 16px;
  color: transparent;
  background: linear-gradient(90deg, #fff 69px, #9aa0a6 69px);
  background-clip: text;
  -webkit-background-clip: text;
}
.extras { display: flex; align-items: center; gap: 18px; margin-left: 18px; }
.avatar { width: 28px; height: 28px; border-radius: 50%; background: #a844bb; font-size: 14px; }
.bookmarks { display: flex; align-items: center; gap: 21px; height: 44px; padding: 0 14px 2px 20px; font-size: 14px; }
.bookmarks a { display: flex; align-items: center; gap: 10px; white-space: nowrap; }
.bookmarks .all { margin-left: auto; height: 20px; padding-left: 14px; border-left: 1px solid #606267; }

/* storefront headers */
.page {
  flex: 1;
  display: flex;
  flex-direction: column;
  padding: 9px 5px 30px 8px;
  background: #e0ebf1;
  font-family: Inter, "Open Sans", sans-serif;
  font-size: 16px;
  font-weight: 300;
  color: #222;
}
.stack { flex: 1; display: flex; flex-direction: column; justify-content: space-between; }
.bar {
  flex: none;
  display: flex;
  align-items: center;
  height: 57px;
  border-bottom: 1px solid #c8d6dc;
  border-radius: 19px 19px 0 0;
  background: #fff;
}
.bar.first { height: 58px; margin-bottom: 27px; }
.bar.spread { justify-content: space-between; }
.bar.short { margin-right: 47px; padding-left: 19px; border-top-left-radius: 0; }
.bar.rose { background: #bd7b7a; }
.burger {
  flex-direction: column;
  gap: 5px;
  width: 66px;
  height: 100%;
  padding: 2px 2px 0 0;
  border-top-left-radius: 19px;
  background: #2c4dac;
}
.burger i { width: 33px; height: 4px; border-radius: 2px; background: #91a5e2; }
.burger.bright { background: #201fdb; }
.burger.plain { background: none; margin-right: 19px; }
.brand { color: #2c4dac; font-size: 24px; font-weight: 700; letter-spacing: 3px; }
.burger + .brand { margin-left: 19px; }
.brand.small { font-size: 19px; }
.brand.word { font-size: 20px; font-weight: 300; letter-spacing: 4px; }
.spread > .brand:nth-child(2) { margin-right: auto; }
.links { flex: 1; display: flex; justify-content: space-evenly; padding: 0 8px 8px 0; }
.icons { display: flex; gap: 19px; margin-right: 28px; }
.icons button, .account button { width: 33px; height: 33px; border: 1px solid #2c4dac; border-radius: 50%; color: #2c4dac; }
.icons svg, .account svg { width: 15px; height: 15px; }
.serif { font: 400 35px/40px "Liberation Serif", serif; color: #000; }
.spread > .serif, .spread > .search { margin-right: auto; }
.spread > .serif { padding-right: 12px; }
.account { display: flex; gap: 9px; margin-right: 20px; }
.account a { line-height: 20px; }
.search { display: flex; align-items: center; gap: 8px; padding-right: 86px; }
.search input { width: 308px; font-size: 15px; font-weight: 700; }
.search input::placeholder { color: #000; opacity: 1; }
.search button { width: 34px; height: 31px; margin-top: 6px; background: #dedede; color: #000; }
.search button svg { width: 16px; height: 16px; }
.shop { display: grid; grid-template-columns: 341fr 275fr 1061fr auto; grid-template-rows: 100%; align-items: center; }
.phone { color: #2c4dac; letter-spacing: 2px; }
.lists { display: flex; flex-direction: column; gap: 26px; }
.row { display: flex; gap: 23px; height: 20px; line-height: 20px; }
.row button { gap: 4px; margin-right: 11px; color: #8b0000; }
.row button:nth-child(4) { margin-right: 5px; }
.row svg { width: 10px; height: 16px; }

/* desktop taskbar */
.taskbar { flex: none; display: flex; align-items: center; height: 50px; background: #22221b; color: #fff; }
.start { width: 60px; height: 50px; }
.finder { display: flex; align-items: center; width: 361px; height: 50px; padding: 0 7px 0 14px; gap: 15px; background: #333; border: 1px solid #5c5c5a; color: #eee; }
.finder input { flex: 1; font-size: 18px; }
.finder input::placeholder { color: #cfcfcf; opacity: 1; }
.wheel { width: 88px; height: 40px; }
.apps { display: flex; }
.apps button { width: 62px; height: 50px; position: relative; }
.badge {
  position: absolute;
  right: 4px;
  bottom: 4px;
  width: 24px;
  height: 22px;
  border: 1px solid #8b8b88;
  border-radius: 11px;
  background: #33403f;
  font-size: 13px;
  font-weight: 600;
  line-height: 19px;
  text-align: center;
}
.badge.profile { right: 14px; bottom: 8px; width: 20px; height: 20px; border: 0; background: #a03fb4; font-size: 11px; color: #e6c2ec; line-height: 20px; }
.dell { width: 28px; height: 28px; border: 2px solid #fff; border-radius: 50%; font-size: 8px; font-weight: 700; line-height: 24px; text-align: center; }
.current { background: #4e4f49; border-bottom: 3px solid #b9b1ad; padding-top: 3px; }
.open::after { content: ""; position: absolute; left: 6px; right: 5px; bottom: 0; height: 3px; background: #b9b1ad; }
.tray { display: flex; align-items: center; height: 50px; margin-left: auto; padding-right: 5px; }
.weather { gap: 12px; font-size: 17px; margin-right: 29px; }
.status { display: flex; align-items: center; gap: 11px; }
.lang { margin: 0 16px 0 11px; font-size: 14px; }
.clock { display: flex; flex-direction: column; align-items: center; font-size: 14px; line-height: 23px; }
.notes { position: relative; width: 70px; height: 50px; padding-right: 4px; padding-bottom: 4px; border-right: 1px solid #5c5c5a; }
.notes .badge { right: 14px; background: #4a4a48; }
```
